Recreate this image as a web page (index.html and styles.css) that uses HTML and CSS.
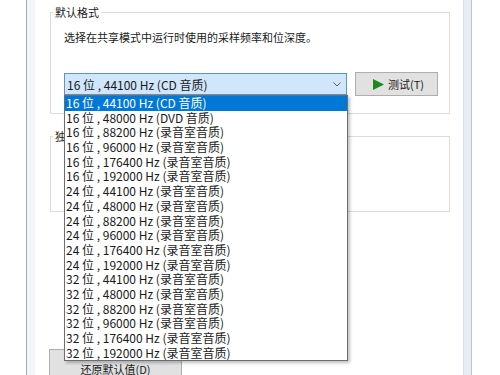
FILE: index.html
```html
<!DOCTYPE html>
<html lang="zh-CN">
  <head>
    <meta charset="UTF-8" />
    <title>高级</title>
    <link rel="stylesheet" href="styles.css">
  </head>
  <body>
    <div class="window">
      <div class="edge-left"></div>
      <div class="page">
        <fieldset class="group">
          <legend>默认格式</legend>
          <p class="desc">选择在共享模式中运行时使用的采样频率和位深度。</p>
          <div class="format-row">
            <div class="combo">
              <span>16 位 , 44100 Hz (CD 音质)</span>
              <svg class="chevron" width="8" height="5" viewBox="0 0 8 5">
                <polyline points="0.5,0.5 4,4 7.5,0.5" fill="none" stroke="#606060" stroke-width="1" />
              </svg>
            </div>
            <button class="btn test-btn">
              <svg width="11" height="11" viewBox="0 0 11 11">
                <polygon points="0,0 11,5.5 0,11" fill="#1b8a1b" />
              </svg>
              测试(T)
            </button>
          </div>
          <ul class="dropdown">
            <li class="selected">16 位 , 44100 Hz (CD 音质)</li>
            <li>16 位 , 48000 Hz (DVD 音质)</li>
            <li>16 位 , 88200 Hz (录音室音质)</li>
            <li>16 位 , 96000 Hz (录音室音质)</li>
            <li>16 位 , 176400 Hz (录音室音质)</li>
            <li>16 位 , 192000 Hz (录音室音质)</li>
            <li>24 位 , 44100 Hz (录音室音质)</li>
            <li>24 位 , 48000 Hz (录音室音质)</li>
            <li>24 位 , 88200 Hz (录音室音质)</li>
            <li>24 位 , 96000 Hz (录音室音质)</li>
            <li>24 位 , 176400 Hz (录音室音质)</li>
            <li>24 位 , 192000 Hz (录音室音质)</li>
            <li>32 位 , 44100 Hz (录音室音质)</li>
            <li>32 位 , 48000 Hz (录音室音质)</li>
            <li>32 位 , 88200 Hz (录音室音质)</li>
            <li>32 位 , 96000 Hz (录音室音质)</li>
            <li>32 位 , 176400 Hz (录音室音质)</li>
            <li>32 位 , 192000 Hz (录音室音质)</li>
          </ul>
        </fieldset>

        <fieldset class="group exclusive">
          <legend>独占模式</legend>
        </fieldset>

        <button class="btn reset-btn">还原默认值(D)</button>
      </div>
      <div class="edge-right"></div>
    </div>
  </body>
</html>
```

FILE: styles.css
```css
* {
  margin: 0;
  padding: 0;
  box-sizing: border-box;
}

body {
  background: #ffffff;
  font-family: "Noto Sans CJK SC", "Microsoft YaHei", sans-serif;
  font-size: 11px;
  color: #1a1a1a;
  overflow: hidden;
}

.window {
  display: flex;
  margin-left: 26px;
  width: 446px;
  height: 375px;
}

.edge-left {
  width: 9px;
  border-left: 1px solid #a3acb6;
  background: #f3f6f9;
}

.edge-right {
  width: 9px;
  background: #e6edf5;
  border-left: 1px solid #d5dfe9;
  border-right: 1px solid #b7c6d6;
}

.page {
  flex: 1;
  padding: 5px 0 0 15px;
  position: relative;
}

.group {
  width: 400px;
  border: 1px solid #dcdcdc;
  padding: 0 0 17px 13px;
}

.group legend {
  margin-left: -11px;
  padding: 0 2px;
  line-height: 14px;
}

.desc {
  margin-top: 11px;
  line-height: 14px;
}

.format-row {
  display: flex;
  gap: 8px;
  margin-top: 28px;
}

.combo {
  width: 283px;
  height: 22px;
  margin-top: 1px;
  display: flex;
  align-items: center;
  justify-content: space-between;
  padding: 0 5px 0 2px;
  font-size: 12px;
  background: #cfe6fb;
  border: 1px solid #5b95c9;
}

.btn {
  font: inherit;
  color: #1a1a1a;
  background: #e1e1e1;
  border: 1px solid #adadad;
}

.test-btn {
  width: 83px;
  height: 24px;
  display: flex;
  align-items: center;
  gap: 4px;
  padding-left: 17px;
}

.dropdown {
  list-style: none;
  position: absolute;
  left: 29px;
  top: 95px;
  width: 284px;
  font-size: 12px;
  background: #ffffff;
  border: 1px solid #6a6f76;
  box-shadow: 2px 2px 3px rgba(0, 0, 0, 0.25);
  z-index: 10;
}

.dropdown li {
  height: 14.7px;
  line-height: 14.7px;
  padding-left: 1px;
  white-space: nowrap;
}

.dropdown li.selected {
  background: #0078d7;
  color: #ffffff;
}

.exclusive {
  margin-top: 15px;
  height: 83px;
}

.reset-btn {
  display: block;
  margin: 137px 0 0 -1px;
  width: 133px;
  height: 32px;
  padding-top: 8px;
}
```
